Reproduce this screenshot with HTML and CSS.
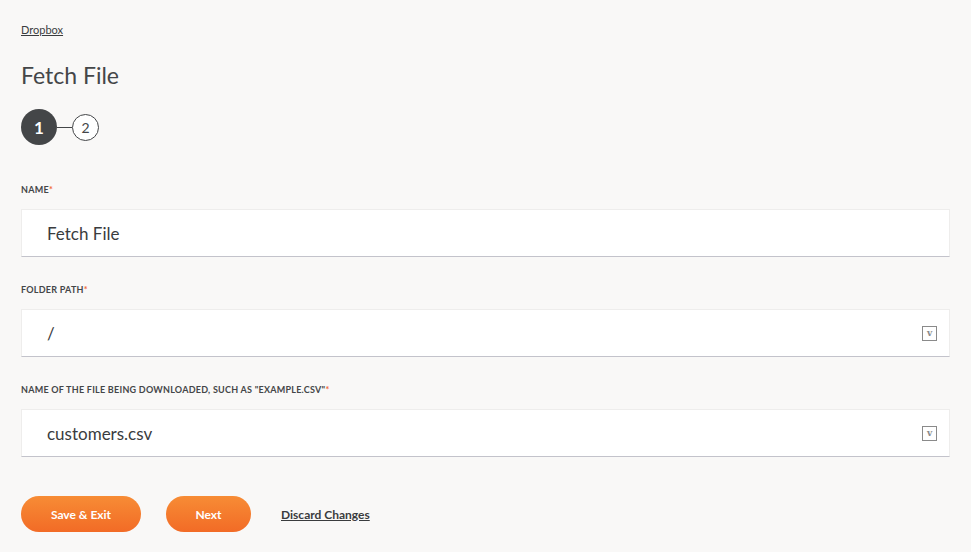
FILE: index.html
```html
<!DOCTYPE html>
<html>
<head>
<meta charset="utf-8">
<link rel="stylesheet" href="styles.css">
</head>
<body>
<div class="page">
  <a class="crumb" href="#">Dropbox</a>
  <h1 class="title">Fetch File</h1>
  <div class="steps">
    <span class="step active">1</span>
    <span class="step-line"></span>
    <span class="step">2</span>
  </div>
  <div class="field">
    <label class="label">NAME<span class="req">*</span></label>
    <div class="input"><span class="value">Fetch File</span></div>
  </div>
  <div class="field">
    <label class="label">FOLDER PATH<span class="req">*</span></label>
    <div class="input"><span class="value">/</span><span class="var">v</span></div>
  </div>
  <div class="field">
    <label class="label">NAME OF THE FILE BEING DOWNLOADED, SUCH AS "EXAMPLE.CSV"<span class="req">*</span></label>
    <div class="input"><span class="value">customers.csv</span><span class="var">v</span></div>
  </div>
  <div class="actions">
    <button class="btn save">Save &amp; Exit</button>
    <button class="btn next">Next</button>
    <a class="discard" href="#">Discard Changes</a>
  </div>
</div>
</body>
</html>
```
FILE: styles.css
```css
html, body {
  margin: 0;
  padding: 0;
  background: #f9f8f7;
}
body {
  font-family: Lato, "Open Sans", sans-serif;
  color: #444648;
}
.page {
  padding: 18px 21px 0 21px;
  width: 929px;
}
.crumb {
  display: inline-block;
  font-size: 11px;
  color: #3a3c3e;
  text-decoration: underline;
  line-height: 15px;
}
.title {
  margin: 24px 0 0 0;
  font-size: 23px;
  font-weight: 400;
  line-height: 28px;
  color: #444648;
}
.steps {
  display: flex;
  align-items: center;
  margin-top: 20px;
}
.step {
  width: 25px;
  height: 25px;
  border: 1px solid #444648;
  border-radius: 50%;
  display: flex;
  align-items: center;
  justify-content: center;
  font-size: 14px;
  color: #444648;
  background: #fff;
}
.step.active {
  width: 36px;
  height: 36px;
  border: none;
  background: #444648;
  color: #fff;
  font-weight: 700;
  font-size: 17px;
}
.step-line {
  width: 15px;
  height: 1px;
  background: #444648;
}
.field {
  margin-top: 39px;
}
.field + .field {
  margin-top: 27px;
}
.label {
  display: block;
  font-size: 9px;
  font-weight: 700;
  letter-spacing: 0.25px;
  line-height: 12px;
  color: #444648;
}
.req {
  color: #f26a3a;
}
.input {
  margin-top: 13px;
  background: #fff;
  border: 1px solid #eeedec;
  border-bottom: 1px solid #c3c3cb;
  box-sizing: border-box;
  height: 48px;
  display: flex;
  align-items: center;
  justify-content: space-between;
  padding: 0 12px 0 25px;
}
.value {
  font-size: 17px;
  color: #3a3c3e;
}
.var {
  width: 13px;
  height: 13px;
  border: 1px solid #8a8a8a;
  font-family: "DejaVu Serif", serif;
  font-size: 9px;
  font-weight: 700;
  color: #8a8a8a;
  display: flex;
  align-items: center;
  justify-content: center;
  line-height: 1;
}
.actions {
  display: flex;
  align-items: center;
  margin-top: 39px;
}
.btn {
  height: 36px;
  border: none;
  border-radius: 18px;
  background: linear-gradient(#f78c35, #f26b26);
  color: #fff;
  font-family: Lato, sans-serif;
  font-weight: 700;
  font-size: 12px;
  padding: 0;
  cursor: pointer;
}
.save { width: 120px; }
.next { width: 85px; margin-left: 25px; }
.discard {
  margin-left: 30px;
  font-size: 12px;
  font-weight: 700;
  color: #3a3c3e;
  text-decoration: underline;
}
```
